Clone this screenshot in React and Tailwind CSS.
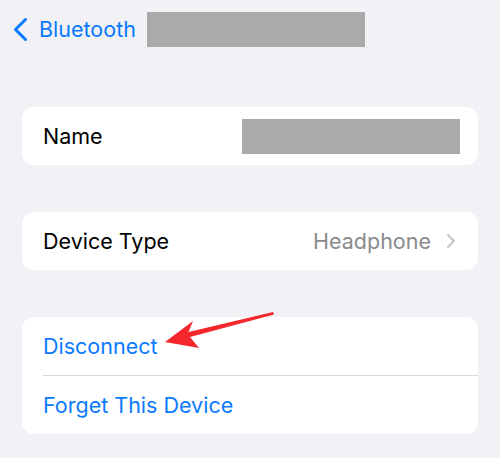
export default function App() {
  return (
    <div
      className="relative w-[500px] h-[458px] bg-[#f1f1f6] overflow-hidden"
      style={{ fontFamily: 'Inter, "Liberation Sans", sans-serif' }}
    >
      {/* Nav bar */}
      <div className="flex items-center h-[35px] mt-[12px] pl-[12px]">
        <svg width="17" height="25" viewBox="0 0 17 25" className="shrink-0">
          <path d="M13.5 2.5 L3.5 12.5 L13.5 22.5" fill="none" stroke="#0a7aff" strokeWidth="3" strokeLinecap="round" strokeLinejoin="round" />
        </svg>
        <span className="ml-[10px] text-[21.5px] text-[#0a7aff]">Bluetooth</span>
        <div className="ml-[11px] w-[218px] h-[35px] bg-[#aaaaaa]" />
      </div>

      {/* Name */}
      <div className="mx-[22px] mt-[60px] h-[58px] bg-white rounded-[12px] flex items-center pl-[21px] pr-[18px]">
        <span className="text-[21.5px] text-black">Name</span>
        <div className="ml-auto w-[218px] h-[35px] bg-[#aaaaaa]" />
      </div>

      {/* Device type */}
      <div className="mx-[22px] mt-[47px] h-[58px] bg-white rounded-[12px] flex items-center pl-[21px] pr-[22px]">
        <span className="text-[21.5px] text-black">Device Type</span>
        <span className="ml-auto text-[21.5px] text-[#8a8a8e]">Headphone</span>
        <svg width="10" height="16" viewBox="0 0 10 16" className="ml-[15px] shrink-0">
          <path d="M2 2 L8 8 L2 14" fill="none" stroke="#c4c4c7" strokeWidth="2" strokeLinecap="round" strokeLinejoin="round" />
        </svg>
      </div>

      {/* Actions */}
      <div className="mx-[22px] mt-[47px] bg-white rounded-[12px] overflow-hidden">
        <div className="h-[58px] flex items-center pl-[21px]">
          <span className="text-[21.5px] text-[#0a7aff]">Disconnect</span>
        </div>
        <div className="ml-[21px] h-px bg-[#d8d8dc]" />
        <div className="h-[58px] flex items-center pl-[21px]">
          <span className="text-[21.5px] text-[#0a7aff]">Forget This Device</span>
        </div>
      </div>

      {/* Annotation arrow */}
      <svg className="absolute left-0 top-0 pointer-events-none" width="500" height="458" viewBox="0 0 500 458">
        <path d="M273 312 L274 314.5 L190 337 L199 348 L165 342 L193 321 L188.5 332 Z" fill="#f5272c" />
      </svg>
    </div>
  );
}
